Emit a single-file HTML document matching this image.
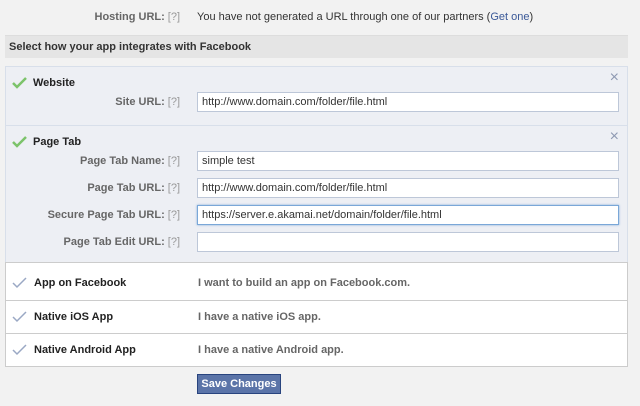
<html><head><style>
body{margin:0;width:640px;height:406px;background:#f2f2f2;font-family:"Liberation Sans",sans-serif;font-size:11px;color:#333;position:relative;overflow:hidden}
.a{position:absolute}
.lbl{position:absolute;right:460px;font-weight:bold;color:#666;white-space:nowrap}
.lbl span{font-weight:normal;color:#999;margin-left:3px}
.inp{position:absolute;left:197px;background:#fff;border:1px solid #bdc7d8;font-size:11px;line-height:18px;padding-left:4px;box-sizing:border-box;width:422px;height:20px}
.box{position:absolute;left:5px;width:623px;background:#edeff4;border:1px solid #d8dfea;box-sizing:border-box}
.row{position:absolute;left:5px;width:623px;background:#fff;border:1px solid #ccc;box-sizing:border-box}
.t{position:absolute;font-weight:bold;color:#222;font-size:11px}
.x{position:absolute;right:8px;color:#8e99b2;font-size:16px}
</style></head><body>
<div class="lbl" style="top:11px">Hosting URL:<span>[?]</span></div>
<div class="a" style="left:197px;top:11px;color:#333">You have not generated a URL through one of our partners (<span style="color:#3b5998">Get one</span>)</div>
<div class="a" style="left:5px;top:35px;width:623px;height:22px;background:#e5e5e5;border-top:1px solid #ddd"></div>
<div class="a" style="left:9px;top:41px;font-weight:bold;color:#333">Select how your app integrates with Facebook</div>

<div class="box" style="top:66px;height:60px">
<svg class="a" style="left:6px;top:10px" width="16" height="12" viewBox="0 0 16 12"><path d="M1 6l4 4 9-9" fill="none" stroke="#7cc36a" stroke-width="2.5"/></svg>
<div class="t" style="left:27px;top:10px">Website</div><div class="x" style="top:2px">×</div></div>
<div class="lbl" style="top:96px">Site URL:<span>[?]</span></div>
<div class="inp" style="top:92px">http://www.domain.com/folder/file.html</div>

<div class="box" style="top:125px;height:138px">
<svg class="a" style="left:6px;top:10px" width="16" height="12" viewBox="0 0 16 12"><path d="M1 6l4 4 9-9" fill="none" stroke="#7cc36a" stroke-width="2.5"/></svg>
<div class="t" style="left:27px;top:10px">Page Tab</div><div class="x" style="top:2px">×</div></div>
<div class="lbl" style="top:155px">Page Tab Name:<span>[?]</span></div>
<div class="inp" style="top:151px">simple test</div>
<div class="lbl" style="top:182px">Page Tab URL:<span>[?]</span></div>
<div class="inp" style="top:178px">http://www.domain.com/folder/file.html</div>
<div class="lbl" style="top:209px">Secure Page Tab URL:<span>[?]</span></div>
<div class="inp" style="top:205px;border:1px solid #7aa7d8;box-shadow:0 0 2px #7aa7d8">https://server.e.akamai.net/domain/folder/file.html</div>
<div class="lbl" style="top:236px">Page Tab Edit URL:<span>[?]</span></div>
<div class="inp" style="top:232px"></div>

<div class="row" style="top:262px;height:39px"><svg class="a" style="left:6px;top:14px" width="16" height="12" viewBox="0 0 16 12"><path d="M1 6l4 4 9-9" fill="none" stroke="#9aa8c4" stroke-width="1.5"/></svg><div class="t" style="left:28px;top:14px">App on Facebook</div><div class="a" style="left:192px;top:14px;color:#666;font-weight:bold">I want to build an app on Facebook.com.</div></div>
<div class="row" style="top:300px;height:34px"><svg class="a" style="left:6px;top:10px" width="16" height="12" viewBox="0 0 16 12"><path d="M1 6l4 4 9-9" fill="none" stroke="#9aa8c4" stroke-width="1.5"/></svg><div class="t" style="left:28px;top:10px">Native iOS App</div><div class="a" style="left:192px;top:10px;color:#666;font-weight:bold">I have a native iOS app.</div></div>
<div class="row" style="top:333px;height:34px"><svg class="a" style="left:6px;top:10px" width="16" height="12" viewBox="0 0 16 12"><path d="M1 6l4 4 9-9" fill="none" stroke="#9aa8c4" stroke-width="1.5"/></svg><div class="t" style="left:28px;top:10px">Native Android App</div><div class="a" style="left:192px;top:10px;color:#666;font-weight:bold">I have a native Android app.</div></div>

<div class="a" style="left:197px;top:374px;width:84px;height:20px;background:#5b74a8;border:1px solid #29447e;box-sizing:border-box;color:#fff;font-weight:bold;text-align:center;line-height:18px">Save Changes</div>
</body></html>
